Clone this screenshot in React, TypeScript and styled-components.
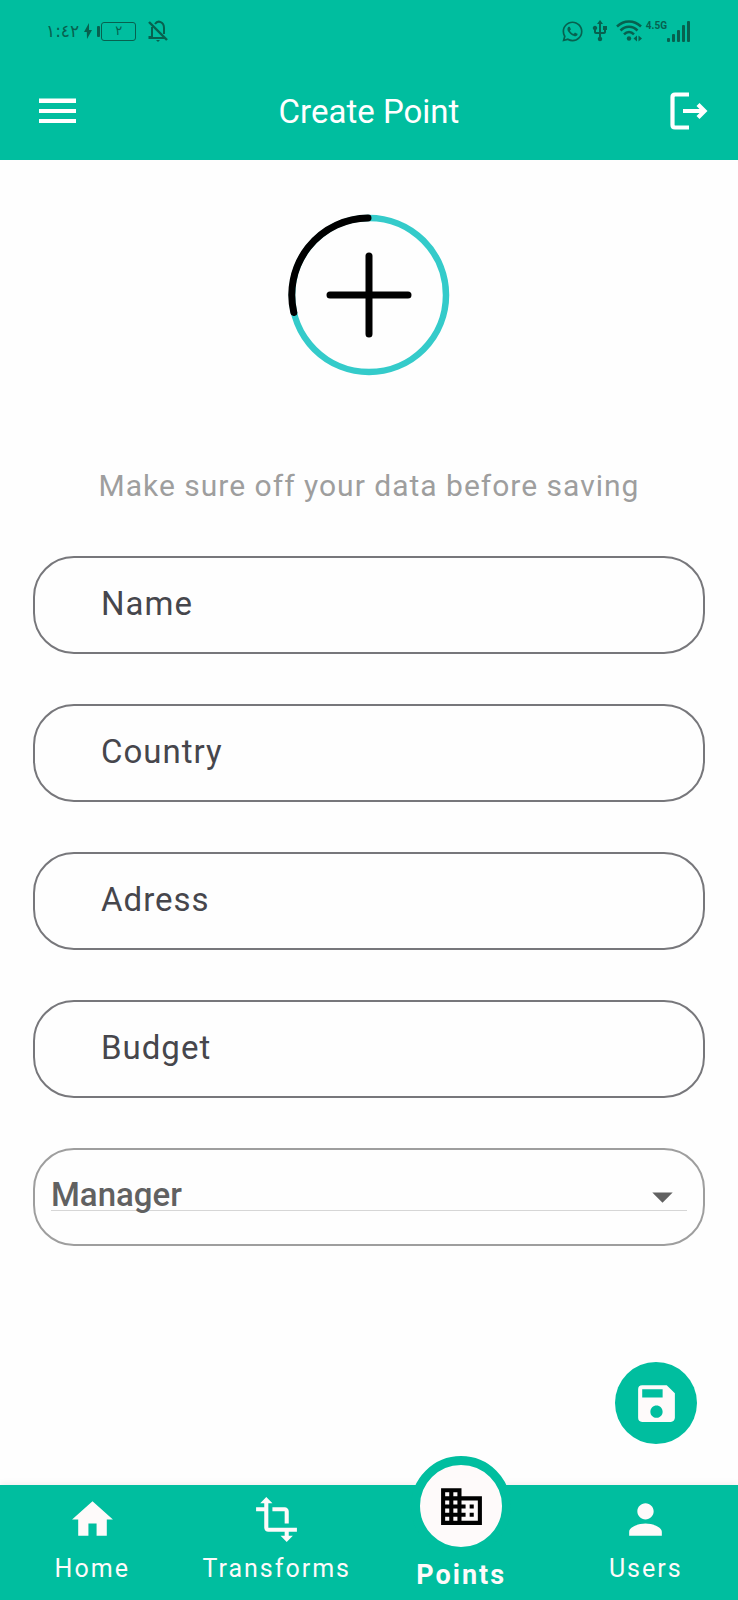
import React from "react";
import styled, { createGlobalStyle, css } from "styled-components";
import { MdArrowDropDown, MdBusiness, MdHome, MdPerson, MdSave, MdTransform, MdUsb } from "react-icons/md";
import { FaWhatsapp } from "react-icons/fa";

const brand = "#00be9f";
const ink = "#07614f";

const GlobalStyle = createGlobalStyle`
  * { box-sizing: border-box; }
  body {
    margin: 0;
    background: #fefefe;
    font-family: Roboto, "DejaVu Sans", sans-serif;
  }
  button, input, select { font: inherit; }
`;

const Screen = styled.div`
  display: flex;
  flex-direction: column;
  min-height: 100vh;
`;

const Header = styled.header`
  background: ${brand};
  color: #fff;
`;

const StatusBar = styled.div`
  display: flex;
  justify-content: space-between;
  align-items: center;
  height: 62px;
  padding: 0 48px 0 46px;
  color: ${ink};
`;

const StatusGroup = styled.div<{ $gap: number }>`
  display: flex;
  align-items: center;
  gap: ${(p) => p.$gap}px;

  svg { display: block; }
`;

const Clock = styled.span`
  font: 17px/24px "DejaVu Sans", sans-serif;
`;

const Battery = styled.span`
  display: flex;
  align-items: center;
  gap: 1px;
  margin-right: 8px;

  &::before {
    content: "";
    width: 3px;
    height: 11px;
    border-radius: 1px;
    background: ${ink};
  }
`;

const BatteryLevel = styled.span`
  width: 35px;
  height: 19px;
  border: 1px solid ${ink};
  border-radius: 3px;
  font: 13px/16px "DejaVu Sans", sans-serif;
  text-align: center;
`;

const Network = styled.span`
  display: flex;
  align-items: flex-start;
`;

const NetworkLabel = styled.span`
  font: bold 10px/10px Roboto, sans-serif;
`;

const AppBar = styled.div`
  display: grid;
  grid-template-columns: 1fr auto 1fr;
  align-items: center;
  height: 98px;
  padding: 0 24px;
`;

const Title = styled.h1`
  margin: 0;
  padding-top: 2px;
  font-size: 33px;
  line-height: 40px;
  font-weight: 400;
`;

const IconButton = styled.button`
  display: grid;
  place-items: center;
  width: 50px;
  height: 50px;
  padding: 0;
  border: 0;
  background: none;
  color: #fff;
  cursor: pointer;
`;

const MenuButton = styled(IconButton)`
  margin-left: 9px;
`;

const LogoutButton = styled(IconButton)`
  justify-self: end;
`;

const Form = styled.form`
  flex: 1;
  display: flex;
  flex-direction: column;
  padding: 54px 33px 41px;
`;

const AddPicture = styled.button`
  align-self: center;
  width: 162px;
  height: 162px;
  padding: 0;
  border: 0;
  background: none;
  cursor: pointer;

  svg { display: block; }
`;

const Hint = styled.p`
  margin: 90px 0 50px;
  color: #9e9e9e;
  font-size: 30px;
  line-height: 40px;
  letter-spacing: 1px;
  text-align: center;
`;

const Fields = styled.div`
  display: flex;
  flex-direction: column;
  gap: 50px;
`;

const outline = css`
  width: 100%;
  height: 98px;
  border-radius: 41px;
  background: transparent;
`;

const TextField = styled.input`
  ${outline}
  padding: 0 66px 4px;
  border: 2px solid #77777b;
  color: #46464c;
  font-size: 33px;
  letter-spacing: 1px;
  outline: none;

  &::placeholder { color: #46464c; opacity: 1; }
`;

const SelectBox = styled.div`
  ${outline}
  display: grid;
  padding: 0 16px 2px;
  border: 2px solid #9e9e9e;

  > * { grid-area: 1 / 1; }

  svg {
    align-self: center;
    justify-self: end;
    color: #616161;
    pointer-events: none;
  }
`;

const Select = styled.select`
  appearance: none;
  width: 100%;
  padding: 0 50px 4px 0;
  border: 0;
  outline: none;
  color: #616161;
  background: linear-gradient(#d6d6d6, #d6d6d6) no-repeat 0 60px / 100% 1px;
  font-size: 33px;
  font-weight: 500;
`;

const SaveButton = styled.button`
  display: grid;
  place-items: center;
  align-self: flex-end;
  width: 82px;
  height: 82px;
  margin: auto 8px 0 0;
  padding: 0;
  border: 0;
  border-radius: 50%;
  background: ${brand};
  color: #fefafa;
  cursor: pointer;
`;

const NavBar = styled.nav`
  display: grid;
  grid-template: 115px / repeat(4, 1fr);
  background: ${brand};
  box-shadow: 0 -2px 6px rgba(0, 0, 0, 0.06);
`;

const NavItem = styled.a<{ $active?: boolean }>`
  display: flex;
  flex-direction: column;
  align-items: center;
  justify-content: flex-end;
  gap: ${(p) => (p.$active ? 3 : 9)}px;
  padding-bottom: ${(p) => (p.$active ? 9 : 15)}px;
  color: #fefafa;
  font-size: ${(p) => (p.$active ? 27 : 25)}px;
  font-weight: ${(p) => (p.$active ? 700 : 400)};
  line-height: 32px;
  letter-spacing: 2px;
  text-decoration: none;
`;

const ActiveDisc = styled.span`
  display: grid;
  place-items: center;
  flex: none;
  width: 100px;
  height: 100px;
  border: 9px solid ${brand};
  border-radius: 50%;
  background: #fefafa;
  color: #000;
`;

const Bolt = () => (
  <svg width="10" height="16" viewBox="0 0 10 16" fill="currentColor" aria-hidden="true">
    <path d="M6 0 1 9h2.800L4 16l5-9H6z" />
  </svg>
);

const BellOff = () => (
  <svg width="20" height="22" viewBox="0 0 20 22" fill="none" stroke="currentColor" strokeWidth="2" aria-hidden="true">
    <path d="M4 7v10H1.500v1H17M7 4C10-.5 16 2 16 8v6" />
    <path d="M1 2l18 18" strokeWidth="2.4" />
    <path d="M8 20h4l-2 2z" fill="currentColor" stroke="none" />
  </svg>
);

const Wifi = () => (
  <svg width="26" height="22" viewBox="0 0 26 22" aria-hidden="true">
    <g fill="none" stroke="currentColor" strokeWidth="2.5">
      <path d="M1 6.500C8-.3 18-.3 25 6.500" />
      <path d="M4.500 10.500C9.500 5.500 16.500 5.500 21.500 10.500" />
      <path d="M8 14.300C11 11.300 15 11.300 18 14.300" />
    </g>
    <circle cx="13" cy="18.500" r="2.200" fill="currentColor" />
    <path d="M21 15.500v6L17.500 18.500zM22.500 15.500v6l3.500-3z" fill="currentColor" />
  </svg>
);

const Signal = () => (
  <svg width="23" height="21" viewBox="0 0 23 21" fill="currentColor" aria-hidden="true">
    <rect x="0" y="17" width="3" height="4" rx="1" />
    <rect x="5" y="13" width="3" height="8" rx="1" />
    <rect x="10" y="9" width="3" height="12" rx="1" />
    <rect x="15" y="4" width="3" height="17" rx="1" />
    <rect x="20" y="0" width="3" height="21" rx="1" />
  </svg>
);

const MenuIcon = () => (
  <svg width="38" height="26" viewBox="0 0 38 26" fill="currentColor" aria-hidden="true">
    <path d="M0 0.500h37v4.500H0zM0 11h37v4H0zM0 21h37v4H0z" />
  </svg>
);

const LogoutIcon = () => (
  <svg width="38" height="38" viewBox="0 0 38 38" fill="none" stroke="currentColor" strokeWidth="4.200" aria-hidden="true">
    <path d="M19 2.500H5Q2.500 2.500 2.500 5v28Q2.500 35.500 5 35.500h14" />
    <path d="M13 19h21M28 12.500 34.500 19 28 25.500" />
  </svg>
);

const AddIcon = () => (
  <svg width="162" height="162" viewBox="0 0 162 162" fill="none" strokeWidth="7" strokeLinecap="round" aria-hidden="true">
    <circle cx="81" cy="81" r="77" stroke="#34cbca" strokeWidth="6.500" />
    <path d="M80 4A77 77 0 0 0 5.800 98.500" stroke="#000" />
    <path d="M81 42v78M42 81h78" stroke="#000" />
  </svg>
);

const fieldNames = ["Name", "Country", "Adress", "Budget"];

export default function App() {
  return (
    <Screen>
      <GlobalStyle />
      <Header>
        <StatusBar>
          <StatusGroup $gap={4}>
            <Clock>١:٤٢</Clock>
            <Bolt />
            <Battery>
              <BatteryLevel>٢</BatteryLevel>
            </Battery>
            <BellOff />
          </StatusGroup>
          <StatusGroup $gap={4}>
            <FaWhatsapp size={23} />
            <MdUsb size={24} />
            <Wifi />
            <Network>
              <NetworkLabel>4.5G</NetworkLabel>
              <Signal />
            </Network>
          </StatusGroup>
        </StatusBar>
        <AppBar>
          <MenuButton type="button" aria-label="Open menu">
            <MenuIcon />
          </MenuButton>
          <Title>Create Point</Title>
          <LogoutButton type="button" aria-label="Log out">
            <LogoutIcon />
          </LogoutButton>
        </AppBar>
      </Header>

      <Form onSubmit={(e: React.FormEvent) => e.preventDefault()}>
        <AddPicture type="button" aria-label="Add picture">
          <AddIcon />
        </AddPicture>
        <Hint>Make sure off your data before saving</Hint>
        <Fields>
          {fieldNames.map((name) => (
            <TextField key={name} type="text" placeholder={name} aria-label={name} />
          ))}
          <SelectBox>
            <Select aria-label="Manager" defaultValue="">
              <option value="">Manager</option>
            </Select>
            <MdArrowDropDown size={49} aria-hidden="true" />
          </SelectBox>
        </Fields>
        <SaveButton type="submit" aria-label="Save">
          <MdSave size={49} />
        </SaveButton>
      </Form>

      <NavBar>
        <NavItem href="#home">
          <MdHome size={49} />
          Home
        </NavItem>
        <NavItem href="#transforms">
          <MdTransform size={49} />
          Transforms
        </NavItem>
        <NavItem href="#points" $active aria-current="page">
          <ActiveDisc>
            <MdBusiness size={49} />
          </ActiveDisc>
          Points
        </NavItem>
        <NavItem href="#users">
          <MdPerson size={49} />
          Users
        </NavItem>
      </NavBar>
    </Screen>
  );
}
